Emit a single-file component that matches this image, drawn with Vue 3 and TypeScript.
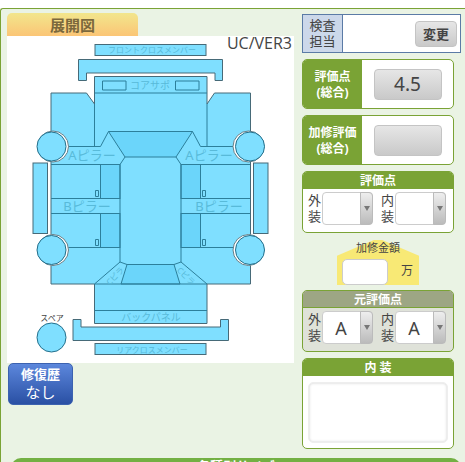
<script setup lang="ts">
import { ref } from 'vue'

interface Grade {
  id: string
  label: string
  value: string
}

const totals = [
  { id: 'total', label: ['評価点', '(総合)'], value: '4.5' },
  { id: 'repair', label: ['加修評価', '(総合)'], value: '' },
]
const current = ref<Grade[]>([
  { id: 'cur-out', label: '外装', value: '' },
  { id: 'cur-in', label: '内装', value: '' },
])
const original = ref<Grade[]>([
  { id: 'org-out', label: '外装', value: 'A' },
  { id: 'org-in', label: '内装', value: 'A' },
])
const grades = ['', 'A', 'B', 'C', 'D', 'E']
const amount = ref('')
const interior = ref('')
</script>

<template>
  <main class="sheet">
    <div class="columns">
      <section class="left">
        <h2 class="tab">展開図</h2>
        <svg class="diagram" viewBox="7 36 287 327" role="img" aria-label="展開図">
          <rect x="7" y="36" width="287" height="327" fill="#fff" />
          <g class="part">
            <rect x="95" y="44.5" width="111" height="11" />
            <path d="M78.500 59.500H222.500V80.500H215V73H86.500V80.500H78.500Z" />
            <path d="M73 319.500H81V327H220.500V319.500H228.500V340.500H73Z" />
            <rect x="95" y="343.500" width="111" height="11" />
            <rect x="33" y="163" width="14.500" height="70.500" />
            <rect x="253.500" y="163" width="14.500" height="70.500" />
            <path d="M94.500 76.500H207V104L214.500 93H250.500V284H207V323.500H94.500V284H51V93H86.500L94.500 104Z" />
          </g>
          <g class="shade">
            <path d="M108.500 131.500H192.500L176 157H125Z" />
            <rect x="100.500" y="164.500" width="19.500" height="34" />
            <rect x="100.500" y="213.500" width="19.500" height="34" />
            <rect x="181" y="164.500" width="19.500" height="34" />
            <rect x="181" y="213.500" width="19.500" height="34" />
            <path d="M127 264.500H174L180 284H121Z" />
          </g>
          <g class="seam">
            <path d="M94.500 93H207M102.500 81H126V90H102.500ZM175.500 81H199V90H175.500Z" />
            <path d="M94.500 104V146.500M207 104V146.500M51 146.500H100.500L108.500 131.500M250 146.500H200.500L192.500 131.500" />
            <path d="M125 157L120 164.500V262L127 264.500M176 157L181 164.500V262L174 264.500" />
            <path d="M51 164.500H120M181 164.500H250M51 198.500H120M181 198.500H250M51 213.500H120M181 213.500H250M51 247.500H120M181 247.500H250" />
            <path d="M120 262L94.500 284H207L181 262M94.500 310.500H207" />
            <path d="M95.500 190.500h3v6h-3ZM95.500 239.500h3v6h-3ZM202.500 190.500h3v6h-3ZM202.500 239.500h3v6h-3Z" />
          </g>
          <g class="arch">
            <circle cx="53" cy="146.500" r="15.500" />
            <circle cx="53" cy="250" r="15.500" />
            <circle cx="248.500" cy="146.500" r="15.500" />
            <circle cx="248.500" cy="250" r="15.500" />
          </g>
          <g class="wheel">
            <circle cx="51.500" cy="146.500" r="14.500" />
            <circle cx="51.500" cy="250" r="14.500" />
            <circle cx="250" cy="146.500" r="14.500" />
            <circle cx="250" cy="250" r="14.500" />
            <circle cx="51.500" cy="337.500" r="14.500" />
          </g>
          <g class="names">
            <text x="152" y="53" class="small">フロントクロスメンバー</text>
            <text x="150" y="89">コアサポ</text>
            <text x="92" y="160" class="large">Aピラー</text>
            <text x="209" y="160" class="large">Aピラー</text>
            <text x="87" y="211" class="large">Bピラー</text>
            <text x="219" y="211" class="large">Bピラー</text>
            <text x="115" y="279" class="small" transform="rotate(-45 115 276)">Cピラ</text>
            <text x="186" y="279" class="small" transform="rotate(45 186 276)">Cピラ</text>
            <text x="151" y="321">バックパネル</text>
            <text x="152" y="353" class="small">リアクロスメンバー</text>
          </g>
          <text x="52" y="321" class="spare">スペア</text>
          <text x="292" y="49" class="version">UC/VER3</text>
        </svg>
        <button type="button" class="history"><b>修復歴</b><span>なし</span></button>
      </section>

      <section class="right">
        <div class="inspector">
          <span class="inspector-label">検査<br />担当</span>
          <div class="inspector-body"><button type="button" class="gray change">変更</button></div>
        </div>

        <div v-for="t in totals" :key="t.id" class="total">
          <span :id="t.id" class="total-label">{{ t.label[0] }}<br />{{ t.label[1] }}</span>
          <div class="total-body">
            <button type="button" class="gray score" :aria-labelledby="t.id">{{ t.value }}</button>
          </div>
        </div>

        <div class="card">
          <h3>評価点</h3>
          <div class="grades">
            <div v-for="g in current" :key="g.id" class="grade">
              <label :for="g.id">{{ g.label }}</label>
              <div class="pick">
                <select :id="g.id" v-model="g.value">
                  <option v-for="o in grades" :key="o" :value="o">{{ o }}</option>
                </select>
                <span class="arrow"></span>
              </div>
            </div>
          </div>
        </div>

        <div class="amount">
          <label for="amount">加修金額</label>
          <div class="amount-row"><input id="amount" v-model="amount" type="text" /><span>万</span></div>
        </div>

        <div class="card muted">
          <h3>元評価点</h3>
          <div class="grades">
            <div v-for="g in original" :key="g.id" class="grade">
              <label :for="g.id">{{ g.label }}</label>
              <div class="pick">
                <select :id="g.id" v-model="g.value">
                  <option v-for="o in grades" :key="o" :value="o">{{ o }}</option>
                </select>
                <span class="arrow"></span>
              </div>
            </div>
          </div>
        </div>

        <div class="card notes">
          <h3><label for="interior">内 装</label></h3>
          <div class="notes-body"><textarea id="interior" v-model="interior"></textarea></div>
        </div>
      </section>
    </div>
    <h2 class="bar">各種別サイズ</h2>
  </main>
</template>

<style>
body {
  margin: 0;
  overflow: hidden;
}
</style>

<style scoped>
* {
  box-sizing: border-box;
}
.sheet {
  margin-top: 8px;
  padding: 4px 4px 0 6px;
  border-top: 1px solid #7aa335;
  border-left: 1px solid #7aa335;
  border-top-left-radius: 3px;
  background: #eaf3e4;
  color: #444;
  font-family: "Noto Sans", "Noto Sans CJK JP", sans-serif;
}
.columns {
  display: grid;
  grid-template-columns: minmax(0, 1fr) 159px;
  gap: 8px;
}
h2,
h3 {
  margin: 0;
}
button,
input,
select,
textarea {
  margin: 0;
  color: inherit;
  font-family: inherit;
}
.tab {
  width: 131px;
  height: 23px;
  border-radius: 5px 5px 0 0;
  background: linear-gradient(#f2e68c, #fbc576);
  color: #7b683c;
  font-size: 15px;
  line-height: 24px;
  text-align: center;
}
.diagram {
  display: block;
  width: 100%;
  overflow: visible;
}
.part {
  fill: #7fdfff;
  stroke: #466a78;
}
.shade {
  fill: #6bd5fa;
  stroke: #2c7f9b;
}
.seam {
  fill: none;
  stroke: #2c7f9b;
}
.arch {
  fill: #fff;
  stroke: #667f88;
}
.wheel {
  fill: #7fdfff;
  stroke: #246f8b;
}
.names {
  fill: #58bad9;
  font-size: 10px;
  text-anchor: middle;
}
.names .small {
  font-size: 8px;
}
.names .large {
  font-size: 13px;
}
.spare {
  fill: #444;
  font-size: 8px;
  text-anchor: middle;
}
.version {
  fill: #444;
  font-family: "Open Sans", "Noto Sans", sans-serif;
  font-size: 16px;
  text-anchor: end;
}
.history {
  display: flex;
  flex-direction: column;
  align-items: center;
  width: 65px;
  height: 42px;
  margin-left: 1px;
  padding: 1px 0 0;
  border: 1px solid #3c62b0;
  border-radius: 5px;
  background: linear-gradient(#5c87dc, #2a50a4);
  color: #fff;
  font-size: 13px;
  line-height: 18px;
}
.history span {
  font-size: 15px;
}
.right {
  display: flex;
  flex-direction: column;
  align-items: flex-start;
  padding-top: 1px;
}
.inspector {
  display: flex;
  width: 100%;
  height: 39px;
  margin-bottom: 6px;
  border: 1px solid #5b7ba6;
  background: #fff;
}
.inspector-label {
  width: 40px;
  padding-top: 2px;
  border-right: 1px solid #5b7ba6;
  background: #ccd8ea;
  font-size: 13px;
  line-height: 16px;
  text-align: center;
}
.inspector-body {
  display: flex;
  flex: 1;
  align-items: center;
  justify-content: flex-end;
  padding-right: 3px;
}
.gray {
  padding: 0;
  border: 1px solid #c4c4c4;
  border-radius: 4px;
  background: linear-gradient(#e6e6e6, #c9c9c9);
}
.change {
  width: 42px;
  height: 26px;
  font-size: 13px;
  font-weight: bold;
  line-height: 20px;
}
.total {
  display: flex;
  width: 152px;
  height: 50px;
  margin-bottom: 6px;
  border: 1px solid #7aa335;
  border-radius: 5px;
  background: #fff;
  overflow: hidden;
}
.total-label {
  width: 59px;
  padding-top: 9px;
  background: #7aa335;
  color: #fff;
  font-size: 12px;
  font-weight: bold;
  line-height: 16px;
  text-align: center;
}
.total-body {
  display: flex;
  flex: 1;
  align-items: center;
  justify-content: center;
}
.score {
  width: 68px;
  height: 31px;
  font-size: 19px;
  line-height: 28px;
}
.card {
  width: 152px;
  border: 1px solid #7aa335;
  border-radius: 5px;
  background: #fff;
  overflow: hidden;
}
.card h3 {
  height: 17px;
  background: #7aa335;
  color: #fff;
  font-size: 12px;
  line-height: 17px;
  text-align: center;
}
.grades {
  display: flex;
  justify-content: space-between;
  height: 43px;
  padding: 3px 7px 0 5px;
}
.grade {
  display: flex;
  gap: 1px;
}
.grade label {
  width: 13px;
  font-size: 13px;
  line-height: 16px;
  word-break: break-all;
}
.pick {
  position: relative;
  width: 51px;
  height: 33px;
}
.pick select {
  width: 100%;
  height: 100%;
  padding: 0 13px 0 0;
  border: 1px solid #ccc;
  border-radius: 4px;
  background: #fff;
  font-size: 18px;
  text-align: center;
  text-align-last: center;
  appearance: none;
}
.arrow {
  position: absolute;
  top: 0;
  right: 0;
  display: flex;
  align-items: center;
  justify-content: center;
  width: 13px;
  height: 33px;
  border: 1px solid #bbb;
  border-radius: 0 4px 4px 0;
  background: linear-gradient(#eee, #bbb);
  pointer-events: none;
}
.arrow::after {
  content: "";
  border: 3px solid transparent;
  border-top: 5px solid #777;
  border-bottom: 0;
}
.amount {
  position: relative;
  width: 82px;
  height: 45px;
  margin: 7px 0 5px 35px;
}
.amount::before {
  position: absolute;
  inset: 0;
  background: #f8e975;
  clip-path: polygon(0 35%, 45% 0, 55% 0, 100% 35%, 100% 100%, 0 100%);
  content: "";
}
.amount label {
  position: relative;
  display: block;
  height: 19px;
  font-size: 11px;
  line-height: 16px;
  text-align: center;
}
.amount-row {
  position: relative;
  display: flex;
  gap: 13px;
  padding-left: 5px;
  font-size: 12px;
  line-height: 24px;
}
.amount-row input {
  width: 46px;
  height: 26px;
  padding: 0 4px;
  border: 1px solid #ccc;
  border-radius: 5px;
  background: #fff;
  font-size: 14px;
}
.muted {
  background: #dfe2d9;
}
.muted h3 {
  border-bottom: 1px solid #7aa335;
  background: #9da684;
}
.notes {
  margin-top: 6px;
}
.notes-body {
  padding: 6px 5px 5px;
}
.notes textarea {
  display: block;
  width: 100%;
  height: 61px;
  border: 1px solid #eee;
  border-radius: 5px;
  background: #fff;
  box-shadow: inset 0 0 3px #ccc;
  resize: none;
}
.bar {
  height: 30px;
  margin: 9px 0 0 4px;
  border-radius: 10px 10px 0 0;
  background: #73b043;
  color: #fff;
  font-size: 13px;
  line-height: 16px;
  text-align: center;
}
</style>
